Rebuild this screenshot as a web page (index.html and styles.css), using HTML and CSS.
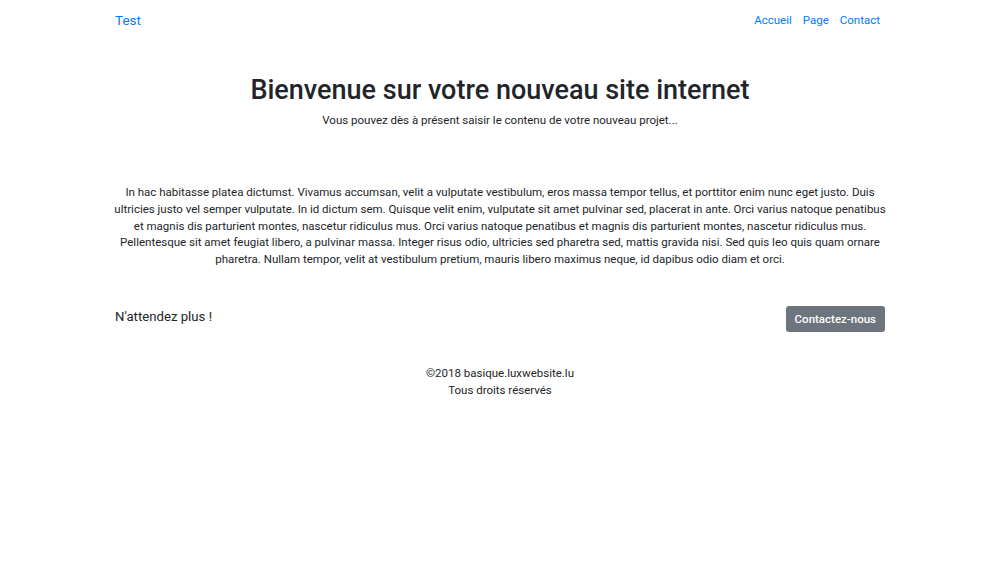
FILE: index.html
```html
<!DOCTYPE html>
<html lang="fr">
<head>
<meta charset="utf-8">
<title>Test</title>
<link rel="stylesheet" href="styles.css">
</head>
<body>
<div class="container">
  <nav class="navbar">
    <a class="brand" href="#">Test</a>
    <ul class="nav">
      <li><a href="#">Accueil</a></li>
      <li><a href="#">Page</a></li>
      <li><a href="#">Contact</a></li>
    </ul>
  </nav>
  <header class="hero">
    <h1>Bienvenue sur votre nouveau site internet</h1>
    <p>Vous pouvez dès à présent saisir le contenu de votre nouveau projet...</p>
  </header>
  <section class="content">
    <p>In hac habitasse platea dictumst. Vivamus accumsan, velit a vulputate vestibulum, eros massa tempor tellus, et porttitor enim nunc eget justo. Duis ultricies justo vel semper vulputate. In id dictum sem. Quisque velit enim, vulputate sit amet pulvinar sed, placerat in ante. Orci varius natoque penatibus et magnis dis parturient montes, nascetur ridiculus mus. Orci varius natoque penatibus et magnis dis parturient montes, nascetur ridiculus mus. Pellentesque sit amet feugiat libero, a pulvinar massa. Integer risus odio, ultricies sed pharetra sed, mattis gravida nisi. Sed quis leo quis quam ornare pharetra. Nullam tempor, velit at vestibulum pretium, mauris libero maximus neque, id dapibus odio diam et orci.</p>
  </section>
  <section class="cta">
    <h4>N'attendez plus !</h4>
    <a class="btn" href="#">Contactez-nous</a>
  </section>
  <footer class="footer">
    <p>©2018 basique.luxwebsite.lu</p>
    <p>Tous droits réservés</p>
  </footer>
</div>
</body>
</html>
```
FILE: styles.css
```css
* { box-sizing: border-box; }
html, body { margin: 0; padding: 0; background: #fff; }
body {
  font-family: Roboto, "Liberation Sans", sans-serif;
  font-size: 11.5px;
  line-height: 1.4;
  color: #212529;
}
a { text-decoration: none; color: #007bff; }
.container {
  width: 770px;
  margin: 0 auto;
}
.navbar {
  display: flex;
  justify-content: space-between;
  align-items: center;
  height: 40px;
}
.brand { font-size: 13.5px; }
.nav {
  list-style: none;
  margin: 0;
  padding: 0 5px 0 0;
  display: flex;
  gap: 11px;
}
.nav a { font-size: 11.5px; }
.hero {
  text-align: center;
  padding-top: 34px;
}
.hero h1 {
  margin: 0;
  font-size: 27px;
  font-weight: 500;
  line-height: 1.2;
}
.hero p { margin: 6px 0 0; }
.content {
  text-align: center;
  padding-top: 56px;
}
.content p { margin: 0 -5px; line-height: 16.6px; }
.cta {
  display: flex;
  justify-content: space-between;
  align-items: flex-start;
  padding-top: 42px;
}
.cta h4 {
  margin: 0;
  font-size: 13.2px;
  font-weight: 400;
  line-height: 1.2;
}
.btn {
  background: #6c757d;
  color: #fff;
  border-radius: 3px;
  padding: 0 9px;
  height: 26px;
  display: flex;
  align-items: center;
  font-weight: 500;
  font-size: 11.5px;
  margin-top: -3px;
}
.footer {
  text-align: center;
  padding-top: 33px;
}
.footer p { margin: 0; line-height: 16.5px; }
```
